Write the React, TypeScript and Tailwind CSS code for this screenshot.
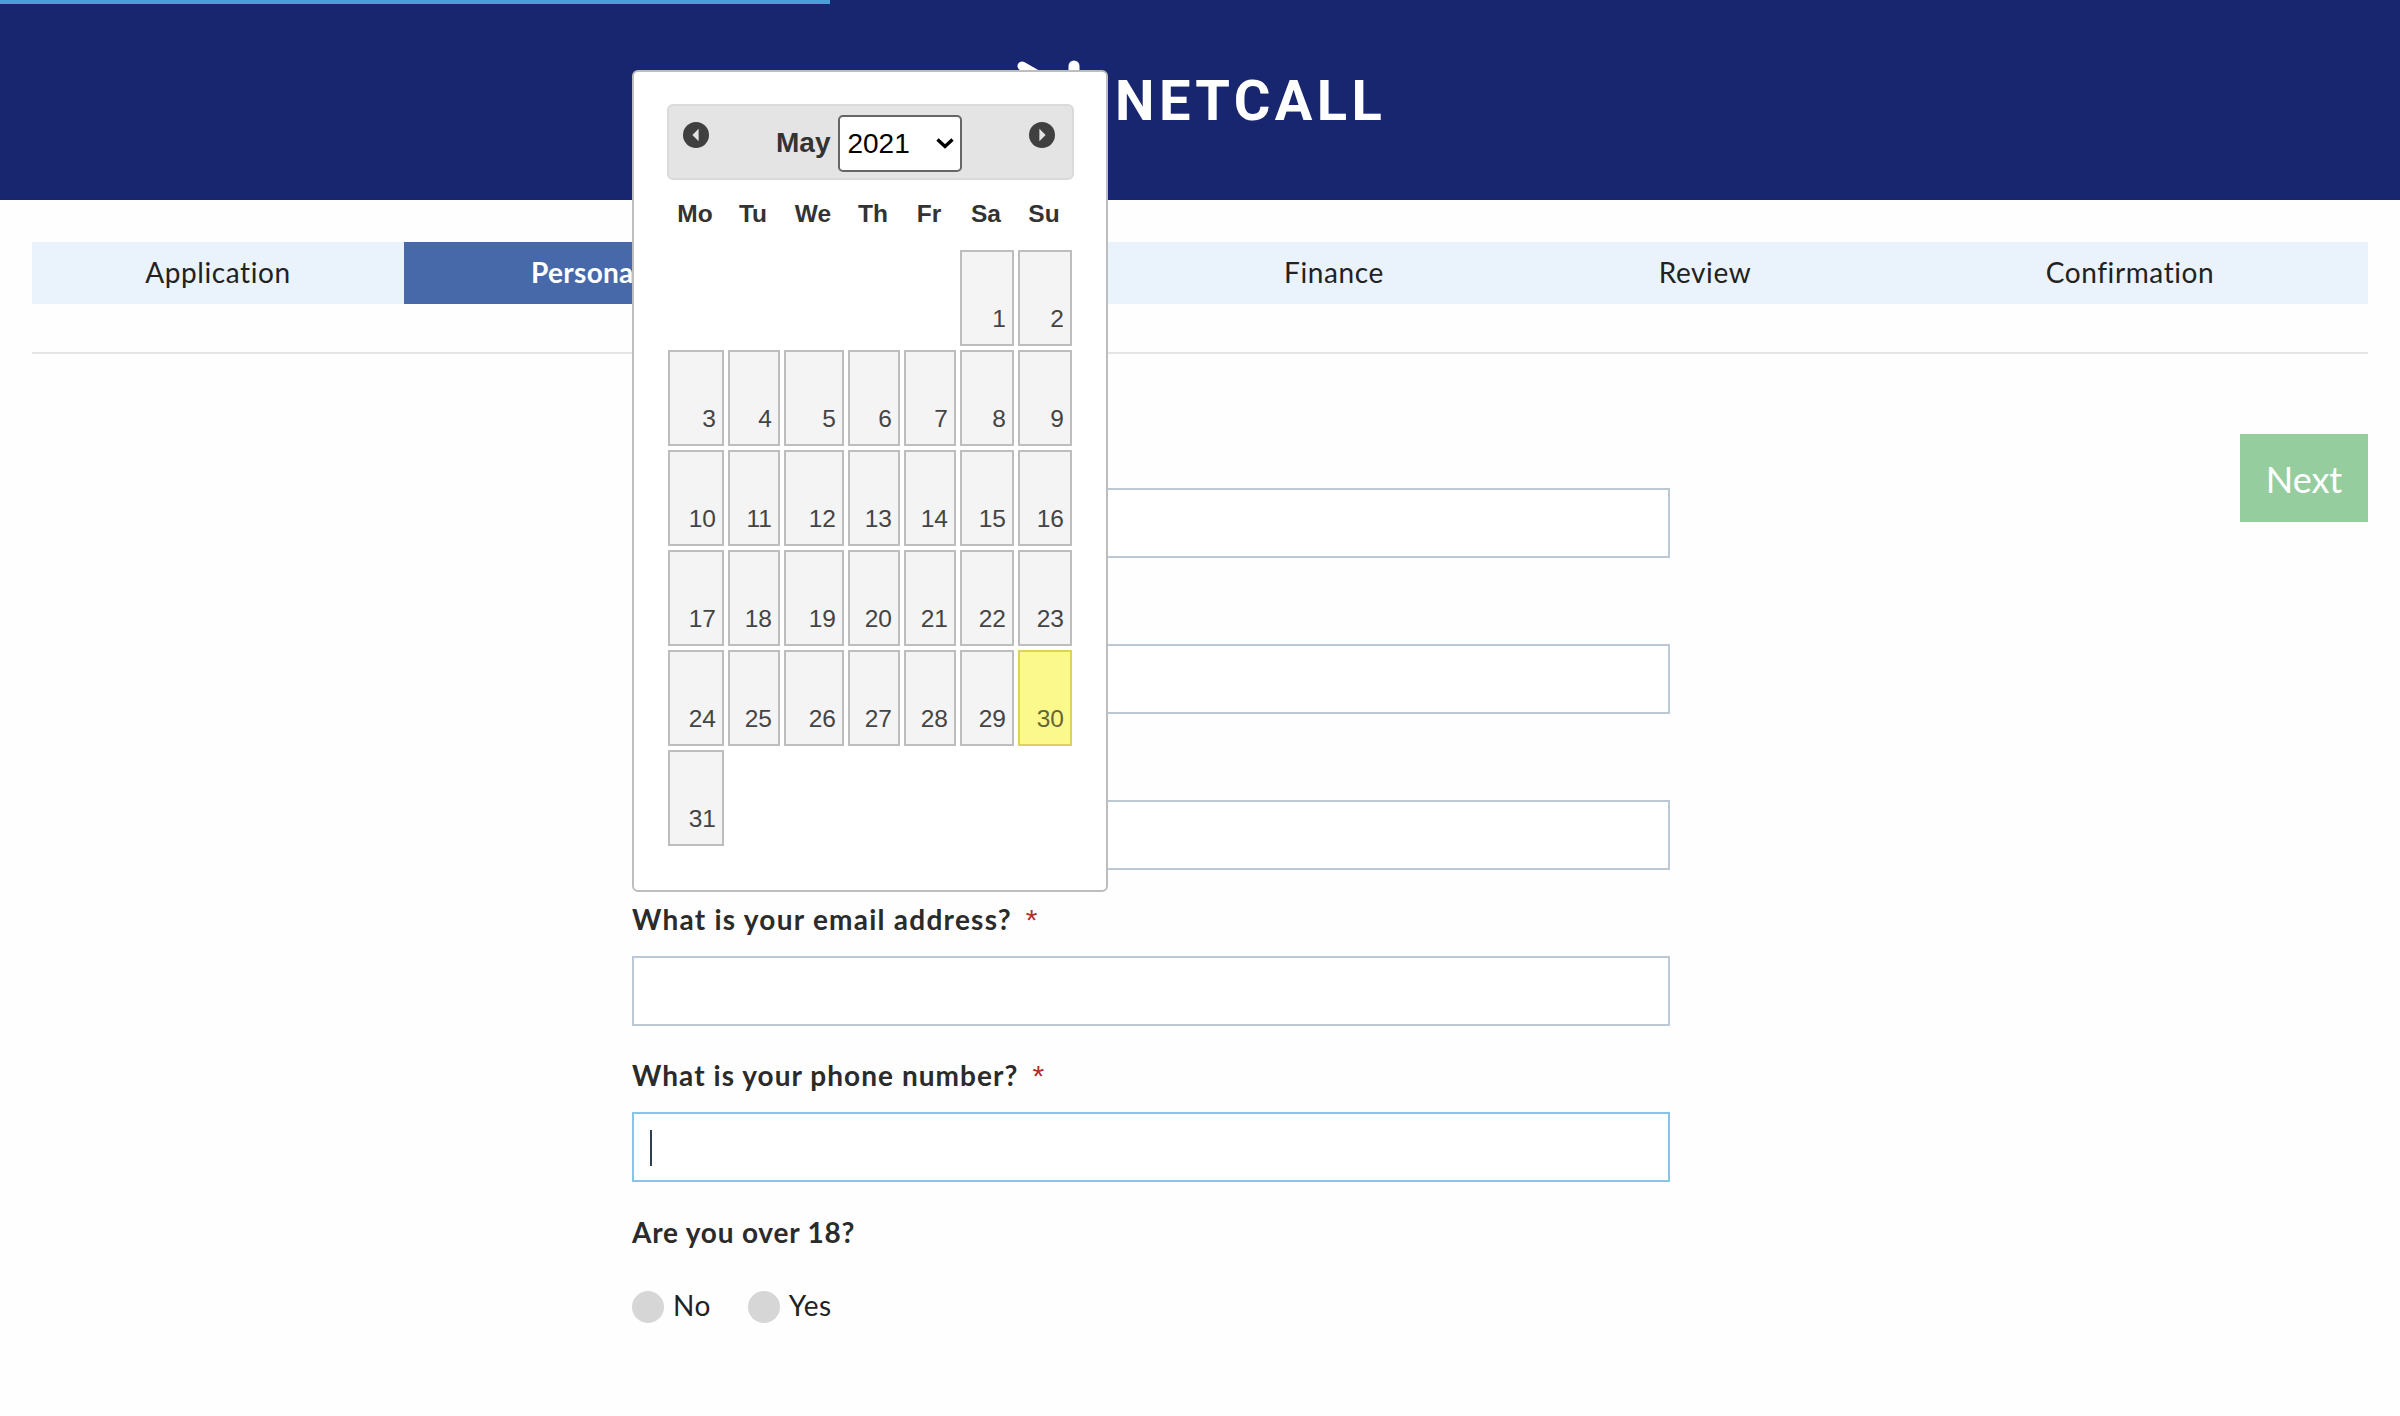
const COLS = "grid grid-cols-[56px_52px_60px_52px_52px_54px_54px] gap-x-1";
const WEEK = ["Mo", "Tu", "We", "Th", "Fr", "Sa", "Su"];
const TABS: [string, string, boolean][] = [
  ["Application", "w-[372px]", false],
  ["Personal", "w-[364px]", true],
  ["", "w-[382px]", false],
  ["Finance", "w-[368px]", false],
  ["Review", "w-[374px]", false],
  ["Confirmation", "w-[476px]", false],
];

function Arrow({ dir }: { dir: "l" | "r" }) {
  return (
    <svg width="26" height="26" viewBox="0 0 25 25" className="shrink-0 mt-[16px]">
      <circle cx="12.5" cy="12.5" r="12.5" fill="#404040" />
      <path d={dir === "l" ? "M15 6.5 L9 12.5 L15 18.5 Z" : "M10 6.5 L16 12.5 L10 18.5 Z"} fill="#e4e4e4" />
    </svg>
  );
}

function Calendar() {
  const cells: (number | null)[] = [null, null, null, null, null];
  for (let d = 1; d <= 31; d++) cells.push(d);
  return (
    <div className="absolute left-[632px] top-[70px] w-[476px] h-[822px] bg-white border-2 border-[#bdbdbd] rounded-[6px] pl-[33px] pt-[32px] font-['Liberation_Sans',Arial,sans-serif] text-[#333]">
      <div className="flex items-start w-[407px] h-[76px] bg-[#e4e4e4] border-2 border-[#dadada] rounded-[6px] pl-[14px] pr-[17px]">
        <Arrow dir="l" />
        <span className="ml-[67px] mt-[17px] text-[28px] leading-[40px] font-bold">May</span>
        <div className="relative ml-[8px] mt-[9px]">
          <select defaultValue="2021" className="appearance-none block w-[124px] h-[57px] bg-white border-2 border-[#666] rounded-[5px] pl-[7px] text-[28px] text-black outline-none">
            <option>2021</option>
          </select>
          <svg width="20" height="12" viewBox="0 0 20 12" className="absolute right-[7px] top-[22px] pointer-events-none">
            <path d="M2.5 2.5 L10 9.5 L17.5 2.5" fill="none" stroke="#000" strokeWidth="3.4" />
          </svg>
        </div>
        <div className="ml-auto">
          <Arrow dir="r" />
        </div>
      </div>
      <div className={`${COLS} mt-[7px] mb-[9px] h-[54px] items-center text-[24.5px] font-bold text-center`}>
        {WEEK.map((w) => (
          <span key={w}>{w}</span>
        ))}
      </div>
      <div className={`${COLS} gap-y-1 ml-[1px]`}>
        {cells.map((d, i) =>
          d === null ? (
            <div key={i} className="h-[96px]" />
          ) : (
            <div
              key={i}
              className={`h-[96px] border-2 flex items-end justify-end pr-[6px] pb-[9px] text-[24.5px] leading-[32px] ${
                d === 30 ? "bg-[#fcf98c] border-[#dcd25c] text-[#666633]" : "bg-[#f4f4f4] border-[#bdbdbd] text-[#444]"
              }`}
            >
              {d}
            </div>
          ),
        )}
      </div>
    </div>
  );
}

function Field({ label, track = "", focused = false }: { label?: string; track?: string; focused?: boolean }) {
  return (
    <div>
      <div className="h-[86px] pb-[14px] flex items-end">
        {label && (
          <span className={`leading-[44px] text-[28px] font-bold text-[#2b2b2b] ${track}`}>
            {label}
            <span className="font-['Liberation_Sans',sans-serif] font-normal text-[30px] text-[#b0302b] ml-[14px]">*</span>
          </span>
        )}
      </div>
      <div className="relative">
        <input
          aria-label={label || "field"}
          className={`block w-full h-[70px] bg-white border-2 outline-none ${focused ? "border-[#86c5e6]" : "border-[#bcc8d3]"}`}
        />
        {focused && <span className="absolute left-[18px] top-[18px] w-[2px] h-[36px] bg-[#2c3e50]" />}
      </div>
    </div>
  );
}

function Radio({ label }: { label: string }) {
  return (
    <div className="flex items-center">
      <span className="w-[32px] h-[32px] rounded-full bg-[#d6d6d6]" />
      <span className="ml-[9px] pb-[3px] text-[28px] leading-[32px] tracking-[0.5px] text-[#222]">{label}</span>
    </div>
  );
}

export default function App() {
  return (
    <div className="relative min-h-[1416px] bg-[#fefefe] font-['Lato','Open_Sans',sans-serif] overflow-hidden">
      <header className="relative h-[200px] bg-[#18266f] flex items-center pl-[1115px] pt-[2px]">
        <div className="absolute left-0 top-0 h-[4px] w-[830px] bg-[#4a9fd8]" />
        <svg width="70" height="14" viewBox="0 0 70 14" className="absolute left-[1014px] top-[60px]">
          <path d="M8 6 L22 14" stroke="#fff" strokeWidth="9" strokeLinecap="round" />
          <path d="M60 6 L60 14" stroke="#fff" strokeWidth="11" strokeLinecap="round" />
        </svg>
        <span className="font-['Roboto',sans-serif] font-bold text-[56px] leading-none tracking-[4.4px] text-white">NETCALL</span>
      </header>

      <div className="px-8">
        <nav className="flex mt-[42px] h-[62px] bg-[#eaf2fb]">
          {TABS.map(([t, w, active], i) => (
            <div
              key={i}
              className={`${w} flex items-center justify-center pb-[2px] text-[28px] ${active ? "bg-[#4769a9] text-white font-bold tracking-[0.3px]" : "text-[#222] tracking-[0.6px]"}`}
            >
              {t}
            </div>
          ))}
        </nav>
        <div className="mt-[48px] h-[2px] bg-[#e4e4e4]" />

        <div className="flex items-start mt-[48px]">
          <form className="ml-[600px] w-[1038px]">
            <Field />
            <Field />
            <Field />
            <Field label="What is your email address?" track="tracking-[1.25px]" />
            <Field label="What is your phone number?" track="tracking-[1.05px]" focused />
            <div className="mt-[28px] leading-[44px] text-[28px] font-bold text-[#2b2b2b] tracking-[0.8px]">Are you over 18?</div>
            <div className="flex gap-x-[37px] mt-[35px]">
              <Radio label="No" />
              <Radio label="Yes" />
            </div>
          </form>
          <button type="button" className="ml-auto mt-[32px] w-[128px] h-[88px] pt-[2px] bg-[#96cd9f] text-white text-[36px]">
            Next
          </button>
        </div>
      </div>

      <Calendar />
    </div>
  );
}
